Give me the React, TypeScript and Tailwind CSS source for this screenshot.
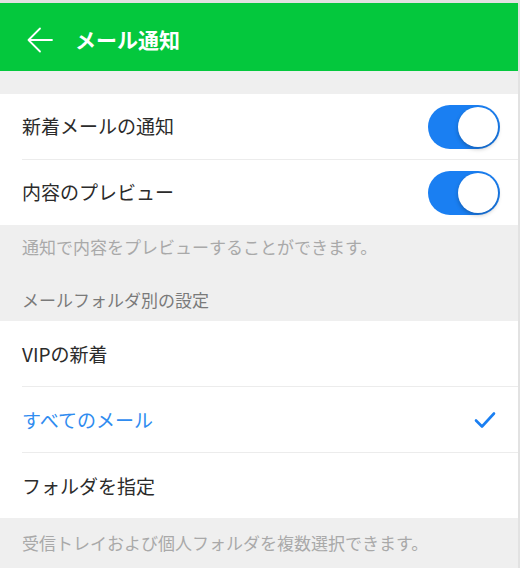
import React from 'react';

const jp = { fontFamily: '"Noto Sans CJK JP", "Noto Sans", sans-serif' };

const Toggle = () => (
  <div className="w-[72px] h-[44px] rounded-full bg-[#1a7ff2] flex items-center justify-end pr-[2px]">
    <div className="w-[40px] h-[40px] rounded-full bg-white shadow-[0_2px_4px_rgba(0,0,0,0.25)]" />
  </div>
);

const Row = ({ label, right, blue }: any) => (
  <div className="h-[65px] flex items-center justify-between pl-[22px] pr-[18px]">
    <span className={`text-[19px] ${blue ? 'text-[#2f8cf0]' : 'text-[#2b2b2b]'}`}>{label}</span>
    {right}
  </div>
);

const Divider = () => <div className="ml-[22px] h-px bg-[#ececec]" />;

const Check = () => (
  <svg width="22" height="18" viewBox="0 0 22 18" className="mr-[4px]">
    <path d="M2 9.5 L8 15.5 L20 2.5" fill="none" stroke="#1a7ff2" strokeWidth="2.6" strokeLinecap="round" strokeLinejoin="round" />
  </svg>
);

export default function App() {
  return (
    <div className="w-[520px] h-[568px] overflow-hidden bg-[#e2e2e2] pt-[3px] pr-[2px]" style={jp}>
      <div className="h-full bg-[#efefef] flex flex-col">
        {/* Header */}
        <div className="h-[69px] bg-[#04c83d] flex items-center pl-[27px] pt-[5px]">
          <svg width="26" height="26" viewBox="0 0 26 26">
            <path d="M25 13 H1.5 M13 1.5 L1.5 13 L13 24.5" fill="none" stroke="white" strokeWidth="1.8" strokeLinecap="round" strokeLinejoin="round" />
          </svg>
          <span className="ml-[22px] text-white text-[21px] font-bold">メール通知</span>
        </div>

        <div className="h-[23px]" />

        <div className="bg-white">
          <Row label="新着メールの通知" right={<Toggle />} />
          <Divider />
          <Row label="内容のプレビュー" right={<Toggle />} />
        </div>

        <div className="h-[44px] flex items-center pl-[22px] text-[17px] text-[#a9a9a9]">
          通知で内容をプレビューすることができます。
        </div>
        <div className="h-[53px] flex items-center pl-[22px] pt-[9px] text-[17px] text-[#7a7a7a]">
          メールフォルダ別の設定
        </div>

        <div className="bg-white">
          <Row label="VIPの新着" />
          <Divider />
          <Row label="すべてのメール" blue right={<Check />} />
          <Divider />
          <Row label="フォルダを指定" />
        </div>

        <div className="h-[50px] flex items-center pl-[22px] text-[17px] text-[#a9a9a9]">
          受信トレイおよび個人フォルダを複数選択できます。
        </div>
      </div>
    </div>
  );
}
